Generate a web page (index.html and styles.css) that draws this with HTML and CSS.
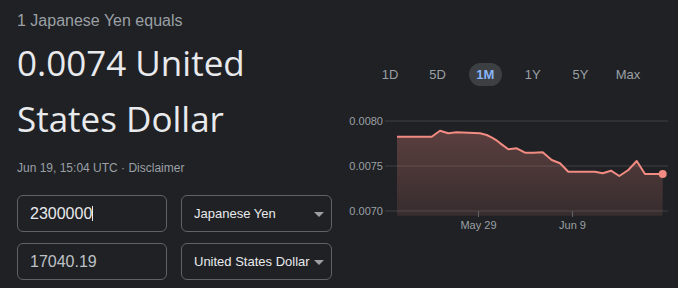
FILE: index.html
```html
<!DOCTYPE html>
<html lang="en">
<head>
    <meta charset="UTF-8">
    <meta name="viewport" content="width=device-width, initial-scale=1.0">
    <title>Currency converter</title>
    <link rel="stylesheet" href="styles.css">
</head>
<body>
    <div class="converter">
        <div class="rate-side">
            <div class="rate-label">1 Japanese Yen equals</div>
            <div class="rate-value">0.0074 United States Dollar</div>
            <div class="rate-date">Jun 19, 15:04 UTC · <span>Disclaimer</span></div>

            <div class="fields">
                <div class="field active">2300000<span class="caret"></span></div>
                <div class="picker">Japanese Yen</div>
                <div class="field muted">17040.19</div>
                <div class="picker">United States Dollar</div>
            </div>
        </div>

        <div class="chart-side">
            <div class="ranges">
                <div class="range">1D</div>
                <div class="range">5D</div>
                <div class="range selected">1M</div>
                <div class="range">1Y</div>
                <div class="range">5Y</div>
                <div class="range">Max</div>
            </div>

            <svg class="chart" width="338" height="130" viewBox="340 105 338 130">
                <defs>
                    <linearGradient id="fillGrad" x1="0" y1="0" x2="0" y2="1">
                        <stop offset="0" stop-color="#f28b82" stop-opacity="0.28"/>
                        <stop offset="1" stop-color="#f28b82" stop-opacity="0.11"/>
                    </linearGradient>
                </defs>

                <!-- grid -->
                <line class="grid" x1="385" y1="121" x2="668" y2="121"/>
                <line class="grid" x1="385" y1="166" x2="668" y2="166"/>
                <line class="grid" x1="385" y1="211" x2="668" y2="211"/>
                <text class="axis" x="383" y="124.5" text-anchor="end">0.0080</text>
                <text class="axis" x="383" y="169.5" text-anchor="end">0.0075</text>
                <text class="axis" x="383" y="214.5" text-anchor="end">0.0070</text>

                <!-- area + line -->
                <polygon fill="url(#fillGrad)" points="397,136.7 431.7,136.7 440,130.7 448.3,133.3 456.7,132.3 480,133.3 486.7,135 492,137.6 497,140.7 502,144.6 508.3,149.3 516.7,148.3 525,152.7 533.3,152.7 542.7,152.3 551.7,160 560,163.3 568.3,171.7 595,171.7 602.7,173.3 611,170.7 619.3,176 628.3,170 636.7,161 645,174 662.7,174 662.7,215.7 397,215.7"/>
                <polyline class="line" points="397,136.7 431.7,136.7 440,130.7 448.3,133.3 456.7,132.3 480,133.3 486.7,135 492,137.6 497,140.7 502,144.6 508.3,149.3 516.7,148.3 525,152.7 533.3,152.7 542.7,152.3 551.7,160 560,163.3 568.3,171.7 595,171.7 602.7,173.3 611,170.7 619.3,176 628.3,170 636.7,161 645,174 662.7,174"/>
                <circle class="dot" cx="662.7" cy="174" r="4"/>

                <!-- x axis -->
                <line class="tick" x1="478.5" y1="211" x2="478.5" y2="217"/>
                <line class="tick" x1="572.5" y1="211" x2="572.5" y2="217"/>
                <text class="axis" x="478.5" y="228.5" text-anchor="middle">May 29</text>
                <text class="axis" x="572.5" y="228.5" text-anchor="middle">Jun 9</text>
            </svg>
        </div>
    </div>
</body>
</html>
```

FILE: styles.css
```css
body {
    margin: 0;
    background: #202124;
    font-family: 'Liberation Sans', Arial, sans-serif;
    color: #e8eaed;
}

.converter {
    display: flex;
    width: 678px;
    height: 288px;
    overflow: hidden;
}

.rate-side {
    box-sizing: border-box;
    width: 340px;
    padding: 11px 0 0 17px;
}

.rate-label {
    font-size: 16px;
    line-height: 20px;
    color: #9aa0a6;
}

.rate-value {
    margin-top: 4px;
    width: 300px;
    font-family: 'Open Sans', 'Liberation Sans', sans-serif;
    font-size: 35px;
    line-height: 56px;
    color: #e8eaed;
}

.rate-date {
    margin-top: 13px;
    font-size: 12px;
    line-height: 16px;
    color: #9aa0a6;
}

.fields {
    display: grid;
    grid-template-columns: 150px 151px;
    grid-auto-rows: 37px;
    gap: 11px 14px;
    margin-top: 19px;
}

.field,
.picker {
    box-sizing: border-box;
    position: relative;
    border: 1px solid #5f6368;
    border-radius: 6px;
    line-height: 35px;
    white-space: nowrap;
}

.field {
    padding-left: 12px;
    font-size: 16px;
    color: #e8eaed;
}

.field.muted {
    color: #bdc1c6;
}

.caret {
    display: inline-block;
    width: 1px;
    height: 15px;
    margin-left: 0;
    background: #e8eaed;
    vertical-align: -2px;
}

.picker {
    padding-left: 12px;
    font-size: 13px;
    color: #e8eaed;
}

.picker::after {
    content: '';
    position: absolute;
    right: 7px;
    top: 16px;
    border-left: 5px solid transparent;
    border-right: 5px solid transparent;
    border-top: 5px solid #9aa0a6;
}

.chart-side {
    flex: 1;
    padding-top: 63px;
}

.ranges {
    display: flex;
    gap: 14.6px;
    padding-left: 33.5px;
}

.range {
    width: 33px;
    height: 23px;
    line-height: 23px;
    text-align: center;
    font-size: 13px;
    color: #9aa0a6;
    border-radius: 12px;
}

.range.selected {
    background: #3c4043;
    color: #8ab4f8;
    font-weight: bold;
}

.chart {
    display: block;
    margin-top: 19px;
}

.grid {
    stroke: #3c4043;
    stroke-width: 1;
}

.tick {
    stroke: #5f6368;
    stroke-width: 1;
}

.axis {
    font-family: 'Liberation Sans', Arial, sans-serif;
    font-size: 11px;
    fill: #9aa0a6;
}

.line {
    fill: none;
    stroke: #f28b82;
    stroke-width: 2;
    stroke-linejoin: round;
}

.dot {
    fill: #f28b82;
}
```
